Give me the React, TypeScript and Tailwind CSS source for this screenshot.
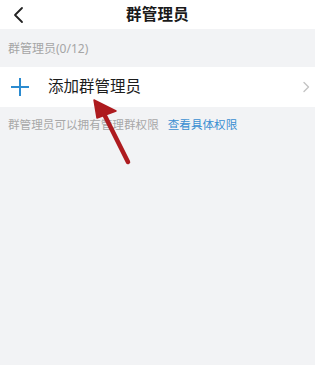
const font = { fontFamily: '"Noto Sans", "Noto Sans CJK SC", sans-serif' };

const BackIcon = () => (
  <svg width="14" height="18" viewBox="0 0 14 18" fill="none">
    <path d="M10 2 L3 9 L10 16" stroke="#222" strokeWidth="1.8" strokeLinecap="round" strokeLinejoin="round" />
  </svg>
);

const PlusIcon = () => (
  <svg width="20" height="20" viewBox="0 0 20 20">
    <path d="M10 1 V19 M1 10 H19" stroke="#2b8bd0" strokeWidth="2" />
  </svg>
);

const Chevron = () => (
  <svg width="8" height="12" viewBox="0 0 8 12" fill="none">
    <path d="M2 1.5 L6.5 6 L2 10.5" stroke="#c4c4c4" strokeWidth="1.4" strokeLinecap="round" strokeLinejoin="round" />
  </svg>
);

// the red pointer drawn over the screenshot
const RedArrow = () => (
  <svg className="absolute left-0 top-0 pointer-events-none" width="315" height="365" viewBox="0 0 315 365">
    <path d="M128 162 L103 112" stroke="#ae1b1f" strokeWidth="4.5" strokeLinecap="round" />
    <path d="M94 100 L97 118 L116 111 Z" fill="#ae1b1f" stroke="#ae1b1f" strokeWidth="1.5" strokeLinejoin="round" />
  </svg>
);

export default function App() {
  return (
    <div className="relative w-[315px] h-[365px] bg-[#f2f3f5] overflow-hidden" style={font}>
      <div className="h-[29px] bg-white flex items-center relative">
        <div className="pl-[12px] pt-[1px]">
          <BackIcon />
        </div>
        <div className="absolute left-0 right-0 text-center text-[15.5px] font-semibold text-[#1a1a1a] leading-none tracking-[0.3px] pointer-events-none">
          群管理员
        </div>
      </div>

      <div className="h-[38px] flex items-center pl-[8px] pt-[2px] text-[12px] text-[#a5a5a5]">
        群管理员(0/12)
      </div>

      <div className="h-[40px] bg-white flex items-center pl-[10px] pr-[5px]">
        <PlusIcon />
        <span className="ml-[18px] text-[15.5px] text-[#1c1c1c] leading-none">添加群管理员</span>
        <div className="ml-auto">
          <Chevron />
        </div>
      </div>

      <div className="pl-[8px] pt-[12px] text-[11.6px] leading-none flex">
        <span className="text-[#a8a8a8]">群管理员可以拥有管理群权限</span>
        <span className="ml-[9px] text-[#3a8fd2]">查看具体权限</span>
      </div>

      <RedArrow />
    </div>
  );
}
